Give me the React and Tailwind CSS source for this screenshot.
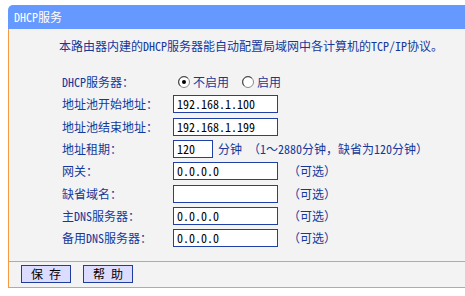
import React from 'react';

const font = "font-['Noto_Sans_Mono_CJK_SC','Noto_Sans_CJK_SC',sans-serif]";

function Radio({ checked }) {
  return (
    <svg width="12" height="12" viewBox="0 0 12 12" className="shrink-0">
      <circle cx="6" cy="6" r="5.5" fill="#ffffff" stroke="#8a8a8a" />
      <path d="M2.2 9.8 A5.4 5.4 0 0 1 2.2 2.2 A5.4 5.4 0 0 1 9.8 2.2" fill="none" stroke="#404040" strokeWidth="1" />
      {checked && <circle cx="6" cy="6" r="2" fill="#000000" />}
    </svg>
  );
}

function Field({ value, w = 'w-[105px]' }) {
  return (
    <div className={`${w} h-[18px] border border-[#1f40a6] bg-white pl-[3px] flex items-center text-black text-[12px] leading-none`}>
      {value}
    </div>
  );
}

const rows = [
  { label: '地址池开始地址：', value: '192.168.1.100' },
  { label: '地址池结束地址：', value: '192.168.1.199' },
];

const optional = [
  { label: '网关：', value: '0.0.0.0' },
  { label: '缺省域名：', value: '' },
  { label: '主DNS服务器：', value: '0.0.0.0' },
  { label: '备用DNS服务器：', value: '0.0.0.0' },
];

export default function App() {
  return (
    <div className={`w-[465px] h-[296px] bg-white pl-2 pt-[5px] text-[12px] ${font}`}>
      <div className="h-[24px] bg-[#6699ff] rounded-tl-[5px] pl-[6px] flex items-center text-white">DHCP服务</div>

      <div className="border-l border-[#f79a44] bg-[#f3f3f3]">
        <div className="h-[233px] border-b border-[#f79a44] pt-[9px] text-[#15389a]">
          <div className="h-[16px] leading-[16px] pl-[50px]">本路由器内建的DHCP服务器能自动配置局域网中各计算机的TCP/IP协议。</div>

          <div className="mt-[17px] pl-[53px] grid grid-cols-[111px_auto] auto-rows-[22.33px] items-center">
            <div>DHCP服务器：</div>
            <div className="flex items-center pl-[5px]">
              <Radio checked />
              <span className="ml-[3px]">不启用</span>
              <span className="ml-[13px]"><Radio /></span>
              <span className="ml-[3px]">启用</span>
            </div>

            {rows.map((r) => (
              <React.Fragment key={r.label}>
                <div>{r.label}</div>
                <Field value={r.value} />
              </React.Fragment>
            ))}

            <div>地址租期：</div>
            <div className="flex items-center">
              <Field value="120" w="w-[40px]" />
              <span className="ml-[5px] whitespace-nowrap">分钟 （1～2880分钟，缺省为120分钟）</span>
            </div>

            {optional.map((r) => (
              <React.Fragment key={r.label}>
                <div>{r.label}</div>
                <div className="flex items-center">
                  <Field value={r.value} />
                  <span className="ml-[10px]">（可选）</span>
                </div>
              </React.Fragment>
            ))}
          </div>
        </div>

        <div className="h-[26px] border-b border-[#f79a44] pl-[12px] pt-[3px] flex gap-[12px]">
          <button className="w-[50px] h-[18px] border border-[#1f3d9e] bg-[#dcdcff] text-black text-[12px] leading-none">保 存</button>
          <button className="w-[50px] h-[18px] border border-[#1f3d9e] bg-[#dcdcff] text-black text-[12px] leading-none">帮 助</button>
        </div>
      </div>
    </div>
  );
}
